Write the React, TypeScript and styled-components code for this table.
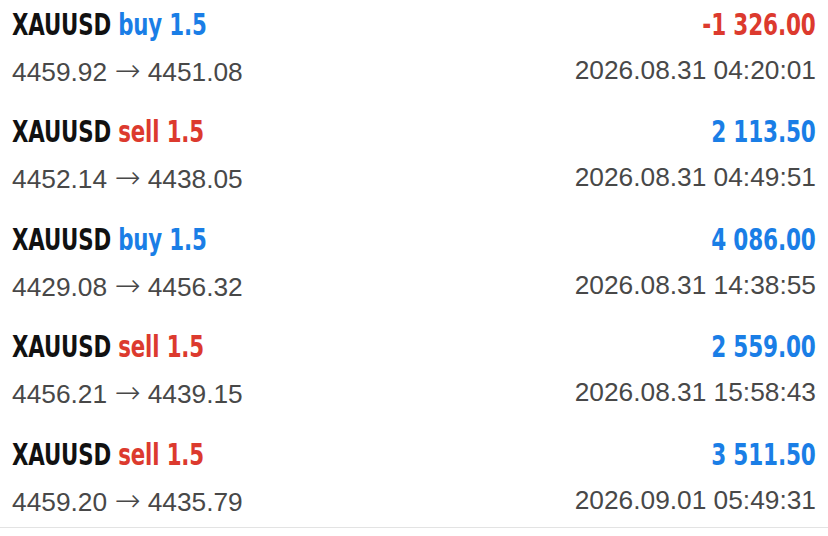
import React from "react";
import styled, { createGlobalStyle } from "styled-components";

const Global = createGlobalStyle`
  html, body { margin: 0; padding: 0; background: #ffffff; }
  body { overflow: hidden; width: 828px; height: 536px; }
`;

const BLUE = "#1a7ee6";
const RED = "#dc3a2e";

const List = styled.div`
  margin-top: -11px;
  border-bottom: 1px solid #e3e3e3;
`;

const Row = styled.div`
  display: grid;
  grid-template-columns: 1fr auto;
  grid-template-rows: 32px 28px;
  row-gap: 15px;
  padding: 19.5px 12px 13px 12px;
  box-sizing: border-box;
  height: 107.5px;
`;

const condensed = `
  font-family: "DejaVu Sans Condensed", "DejaVu Sans", sans-serif;
  font-weight: 700;
  font-size: 30px;
  line-height: 32px;
  white-space: nowrap;
  display: inline-block;
  letter-spacing: -0.2px;
`;

const Title = styled.div`
  ${condensed}
  justify-self: start;
  color: #111111;
  transform: scaleX(0.79);
  transform-origin: left center;
`;

const Side = styled.span<{ $buy: boolean }>`
  color: ${(p) => (p.$buy ? BLUE : RED)};
`;

const Amount = styled.div<{ $neg: boolean }>`
  ${condensed}
  justify-self: end;
  color: ${(p) => (p.$neg ? RED : BLUE)};
  transform: scaleX(0.8);
  transform-origin: right center;
`;

const Sub = styled.div<{ $right?: boolean }>`
  font-family: "Liberation Sans", Arial, sans-serif;
  font-size: 26.3px;
  line-height: 28px;
  color: #484848;
  text-align: ${(p) => (p.$right ? "right" : "left")};
  white-space: nowrap;
`;

const Arrow = styled.span`
  font-family: "DejaVu Sans", sans-serif;
  font-size: 31px;
  font-weight: 300;
  line-height: 28px;
`;

type Trade = {
  side: "buy" | "sell";
  lots: string;
  open: string;
  close: string;
  profit: string;
  time: string;
};

const trades: Trade[] = [
  { side: "buy", lots: "1.5", open: "4459.92", close: "4451.08", profit: "-1 326.00", time: "2026.08.31 04:20:01" },
  { side: "sell", lots: "1.5", open: "4452.14", close: "4438.05", profit: "2 113.50", time: "2026.08.31 04:49:51" },
  { side: "buy", lots: "1.5", open: "4429.08", close: "4456.32", profit: "4 086.00", time: "2026.08.31 14:38:55" },
  { side: "sell", lots: "1.5", open: "4456.21", close: "4439.15", profit: "2 559.00", time: "2026.08.31 15:58:43" },
  { side: "sell", lots: "1.5", open: "4459.20", close: "4435.79", profit: "3 511.50", time: "2026.09.01 05:49:31" },
];

export default function App() {
  return (
    <>
      <Global />
      <List>
        {trades.map((t, i) => (
          <Row key={i}>
            <Title>
              XAUUSD <Side $buy={t.side === "buy"}>{t.side} {t.lots}</Side>
            </Title>
            <Amount $neg={t.profit.startsWith("-")}>{t.profit}</Amount>
            <Sub>
              {t.open} <Arrow>→</Arrow> {t.close}
            </Sub>
            <Sub $right>{t.time}</Sub>
          </Row>
        ))}
      </List>
    </>
  );
}
